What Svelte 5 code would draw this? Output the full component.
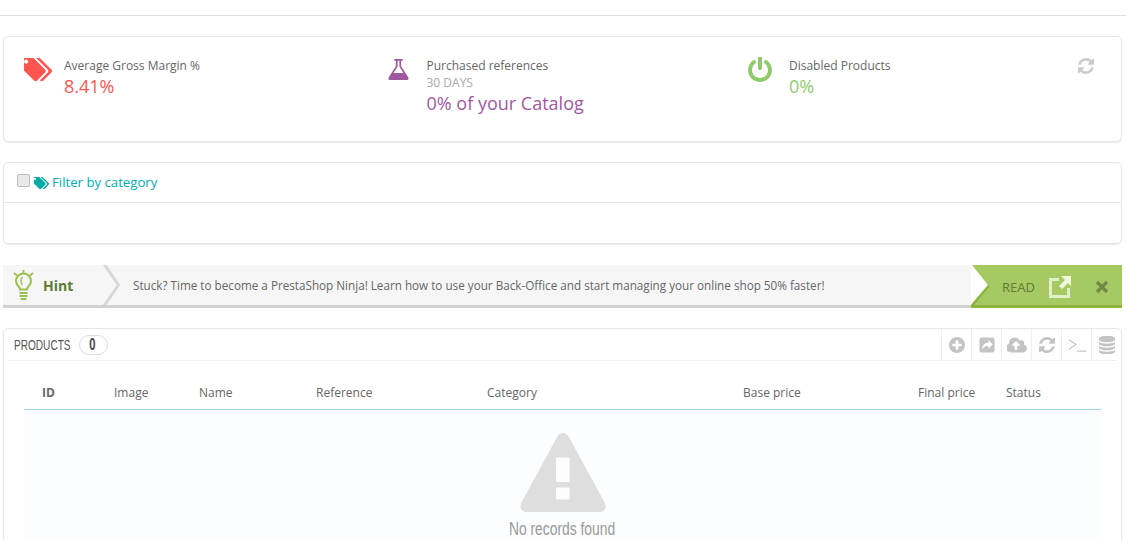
<script>
  const columns = [
    { label: 'ID', w: 72, bold: true },
    { label: 'Image', w: 85 },
    { label: 'Name', w: 117 },
    { label: 'Reference', w: 171 },
    { label: 'Category', w: 256 },
    { label: 'Base price', w: 175 },
    { label: 'Final price', w: 88 },
    { label: 'Status', w: 95 }
  ];
</script>

<div class="page">
  <div class="topbar"></div>

  <section class="card kpis">
    <div class="kpi">
      <svg class="kpi-icon tag" viewBox="128 256 1707 1345"><path d="M384 448q0-53-37.5-90.5t-90.5-37.5-90.5 37.5-37.5 90.5 37.5 90.5 90.5 37.5 90.5-37.5 37.5-90.5zm1067 576q0 53-37 90l-491 492q-39 37-91 37-53 0-90-37l-715-716q-38-37-64.5-101t-26.5-117v-416q0-52 38-90t90-38h416q53 0 117 26.5t102 64.5l715 714q37 39 37 91zm384 0q0 53-37 90l-491 492q-38 38-91 38-36 0-59-14t-53-45l470-470q37-37 37-90 0-52-37-91l-715-714q-38-38-102-64.5t-117-26.5h224q53 0 117 26.5t102 64.5l715 714q37 39 37 91z"/></svg>
      <div class="kpi-text">
        <div class="kpi-title">Average Gross Margin %</div>
        <div class="kpi-value red">8.41%</div>
      </div>
    </div>
    <div class="kpi">
      <svg class="kpi-icon flask" viewBox="135 128 1522 1536"><path d="M1591 1448q56 89 21.5 152.5t-140.5 63.5h-1152q-106 0-140.5-63.5t21.5-152.5l503-793v-399h-64q-26 0-45-19t-19-45 19-45 45-19h512q26 0 45 19t19 45-19 45-45 19h-64v399zm-779-725l-272 429h712l-272-429-20-31v-436h-128v436z"/></svg>
      <div class="kpi-text">
        <div class="kpi-title">Purchased references</div>
        <div class="kpi-sub">30 DAYS</div>
        <div class="kpi-value purple">0% of your Catalog</div>
      </div>
    </div>
    <div class="kpi">
      <svg class="kpi-icon power" viewBox="128 64 1536 1600"><path d="M1664 896q0 156-61 298t-164 245-245 164-298 61-298-61-245-164-164-245-61-298q0-182 80.5-343t226.5-270q43-32 95.5-25t83.5 50q32 42 24.5 94.5t-49.5 84.5q-98 74-151.5 181t-53.5 228q0 104 40.5 198.5t109.5 163.5 163.5 109.5 198.5 40.5 198.5-40.5 163.5-109.5 109.5-163.5 40.5-198.5q0-121-53.5-228t-151.5-181q-42-32-49.5-84.5t24.5-94.5q31-43 84-50t95 25q146 109 226.5 270t80.5 343zm-640-768v640q0 52-38 90t-90 38-90-38-38-90v-640q0-52 38-90t90-38 90 38 38 90z"/></svg>
      <div class="kpi-text">
        <div class="kpi-title">Disabled Products</div>
        <div class="kpi-value green">0%</div>
      </div>
    </div>
    <svg class="kpi-refresh" viewBox="128 128 1536 1536"><path d="M1639 1056q0 5-1 7-64 268-268 434.5t-478 166.5q-146 0-282.5-55t-243.5-157l-129 129q-19 19-45 19t-45-19-19-45v-448q0-26 19-45t45-19h448q26 0 45 19t19 45-19 45l-137 137q71 66 161 102t187 36q134 0 250-65t186-179q11-17 53-117 8-23 30-23h192q13 0 22.5 9.5t9.5 22.5zm25-800v448q0 26-19 45t-45 19h-448q-26 0-45-19t-19-45 19-45l138-138q-148-137-349-137-134 0-250 65t-186 179q-11 17-53 117-8 23-30 23h-199q-13 0-22.5-9.5t-9.5-22.5v-7q65-268 270-434.5t480-166.5q146 0 284 55.5t245 156.5l130-129q19-19 45-19t45 19 19 45z"/></svg>
  </section>

  <section class="card filter">
    <div class="filter-head">
      <input type="checkbox" class="check" />
      <svg class="filter-icon" viewBox="128 256 1707 1345"><path d="M384 448q0-53-37.5-90.5t-90.5-37.5-90.5 37.5-37.5 90.5 37.5 90.5 90.5 37.5 90.5-37.5 37.5-90.5zm1067 576q0 53-37 90l-491 492q-39 37-91 37-53 0-90-37l-715-716q-38-37-64.5-101t-26.5-117v-416q0-52 38-90t90-38h416q53 0 117 26.5t102 64.5l715 714q37 39 37 91zm384 0q0 53-37 90l-491 492q-38 38-91 38-36 0-59-14t-53-45l470-470q37-37 37-90 0-52-37-91l-715-714q-38-38-102-64.5t-117-26.5h224q53 0 117 26.5t102 64.5l715 714q37 39 37 91z"/></svg>
      <span class="filter-label">Filter by category</span>
    </div>
  </section>

  <section class="hint">
    <div class="hint-main">
      <div class="hint-head">
        <svg class="bulb" viewBox="0 0 22 30">
          <g fill="none" stroke="#9bbf4e">
            <path stroke-width="2" d="M7 19.500C7 16.500 3 15.500 3 11a7.500 7.500 0 0 1 15 0C18 15.500 14 16.500 14 19.500z"/>
            <path stroke-width="1.800" d="M10.500 0v3.500M1 3l3 2.500M20 3l-3 2.500"/>
            <path stroke-width="1.300" d="M9.500 7q-3 4 0 8"/>
          </g>
          <path d="M6.500 22h8v2h-8zM6.500 25h8v2h-8zM7.500 28h6v2h-6z" fill="#9bbf4e"/>
        </svg>
        <span class="hint-word">Hint</span>
      </div>
      <svg class="chevron" viewBox="0 0 18 40" preserveAspectRatio="none"><path d="M1 -1 L15.500 20 L1 41" fill="none" stroke="#d8d8d8" stroke-width="3"/></svg>
      <p class="hint-text">Stuck? Time to become a PrestaShop Ninja! Learn how to use your Back-Office and start managing your online shop 50% faster!</p>
    </div>
    <div class="hint-read">
      <svg class="read-edge" viewBox="0 0 18 41"><path d="M17 20L0 41" fill="none" stroke="#8db63e" stroke-width="4"/></svg>
      <span class="read-word">READ</span>
      <svg class="read-icon" viewBox="0 0 22 22">
        <path fill="#e3efc8" d="M0 2h10v3H3v14h15v-7h3v10H0z"/>
        <path fill="#eef6dc" d="M12 0h10v10l-3-3-6 6-3-3 6-6z"/>
      </svg>
      <svg class="read-close" viewBox="0 0 14 14"><path d="M2 2l10 10M12 2L2 12" stroke="#6f8a45" stroke-width="3.200" fill="none"/></svg>
    </div>
  </section>

  <section class="card products">
    <header class="panel-head">
      <span class="panel-title"><span class="narrow-left">PRODUCTS</span></span>
      <span class="badge"><span class="narrow-center">0</span></span>
      <div class="tools">
        <span class="tool"><svg viewBox="128 128 1536 1536"><path d="M1344 960v-128q0-26-19-45t-45-19h-256v-256q0-26-19-45t-45-19h-128q-26 0-45 19t-19 45v256h-256q-26 0-45 19t-19 45v128q0 26 19 45t45 19h256v256q0 26 19 45t45 19h128q26 0 45-19t19-45v-256h256q26 0 45-19t19-45zm320-64q0 209-103 385.5t-279.5 279.5-385.5 103-385.5-103-279.5-279.5-103-385.5 103-385.5 279.5-279.5 385.5-103 385.5 103 279.5 279.5 103 385.5z"/></svg></span>
        <span class="tool"><svg viewBox="0 0 18 18"><path fill-rule="evenodd" d="M3 .5h12A2.500 2.500 0 0 1 17.500 3v12a2.500 2.500 0 0 1-2.500 2.500H3A2.500 2.500 0 0 1 .5 15V3A2.500 2.500 0 0 1 3 .5zm7.500 3v3C7 6.500 4 8 3.500 14c1.500-2.500 3.500-3.800 7-3.800v3l5-4.900z"/></svg></span>
        <span class="tool cloud"><svg viewBox="0 128 1856 1408"><path d="M1216 864q0-14-9-23l-352-352q-9-9-23-9t-23 9l-351 351q-10 12-10 24 0 14 9 23t23 9h224v352q0 13 9.500 22.500t22.500 9.500h192q13 0 22.500-9.500t9.500-22.500v-352h224q13 0 22.500-9.500t9.500-22.500zm640 288q0 159-112.500 271.500t-271.500 112.500h-1088q-185 0-316.500-131.500t-131.500-316.500q0-130 70-240t188-165q-2-30-2-43 0-212 150-362t362-150q156 0 285.500 87t188.500 231q71-62 166-62 106 0 181 75t75 181q0 76-41 138 130 31 213.500 135.500t83.500 238.500z"/></svg></span>
        <span class="tool"><svg viewBox="128 128 1536 1536"><path d="M1639 1056q0 5-1 7-64 268-268 434.5t-478 166.5q-146 0-282.5-55t-243.5-157l-129 129q-19 19-45 19t-45-19-19-45v-448q0-26 19-45t45-19h448q26 0 45 19t19 45-19 45l-137 137q71 66 161 102t187 36q134 0 250-65t186-179q11-17 53-117 8-23 30-23h192q13 0 22.500 9.500t9.500 22.500zm25-800v448q0 26-19 45t-45 19h-448q-26 0-45-19t-19-45 19-45l138-138q-148-137-349-137-134 0-250 65t-186 179q-11 17-53 117-8 23-30 23h-199q-13 0-22.500-9.500t-9.500-22.500v-7q65-268 270-434.500t480-166.500q146 0 284 55.500t245 156.500l130-129q19-19 45-19t45 19 19 45z"/></svg></span>
        <span class="tool term"><svg viewBox="0 0 18 13"><path d="M1 .8l7 4.700-7 4.700" fill="none" stroke="#c4c4c4" stroke-width="1.200"/><path d="M9 11.500h9v1.200h-9z"/></svg></span>
        <span class="tool db"><svg viewBox="128 64 1536 1664"><path d="M896 768q237 0 443-43t325-127v170q0 69-103 128t-280 93.500-385 34.500-385-34.500-280-93.500-103-128v-170q119 84 325 127t443 43zm0 768q237 0 443-43t325-127v170q0 69-103 128t-280 93.500-385 34.500-385-34.500-280-93.500-103-128v-170q119 84 325 127t443 43zm0-384q237 0 443-43t325-127v170q0 69-103 128t-280 93.500-385 34.500-385-34.500-280-93.500-103-128v-170q119 84 325 127t443 43zm0-1152q208 0 385 34.500t280 93.500 103 128v128q0 69-103 128t-280 93.500-385 34.500-385-34.500-280-93.500-103-128v-128q0-69 103-128t280-93.500 385-34.500z"/></svg></span>
      </div>
    </header>

    <div class="table">
      <div class="thead">
        {#each columns as col}
          <div class="th" class:bold={col.bold} style="width: {col.w}px">{col.label}</div>
        {/each}
      </div>
      <div class="empty">
        <svg class="warn" viewBox="0 0 86 79">
          <path fill-rule="evenodd" fill="#dedede" d="M43 0c2.600 0 4.300 1.400 5.600 3.600l36 66c2.500 4.500.2 9.400-5 9.400H6.400c-5.200 0-7.500-4.900-5-9.400l36-66C38.700 1.400 40.400 0 43 0zM37 24.500c-.8 0-1 .6-1 1.200v22.100c0 .7.400 1.200 1 1.200h11.500c.7 0 1.100-.5 1.100-1.200V25.700c0-.6-.4-1.200-1.100-1.200zM37 54.500c-.7 0-1 .5-1 1.100v9.800c0 .7.300 1.100 1 1.100h11.500c.7 0 1.100-.4 1.100-1.100v-9.800c0-.6-.4-1.100-1.100-1.100z"/>
        </svg>
        <div class="empty-text">No records found</div>
      </div>
    </div>
  </section>
</div>

<style>
  :global(html), :global(body) { margin: 0; height: 540px; overflow: hidden; background: #fff; }
  .page { font-family: "Open Sans", sans-serif; color: #555; font-size: 12px; box-sizing: border-box; padding: 0 4px 0 3px; height: 540px; overflow: hidden; }
  .page * { box-sizing: border-box; }
  .topbar { height: 16px; margin: 0 -4px 20px -3px; border-bottom: 1px solid #e0e0e0; }
  .card { background: #fff; border: 1px solid #e6e6e6; border-radius: 5px; box-shadow: 0 1px 1px #eee; }

  .kpis { height: 106px; display: flex; position: relative; padding: 17px 0 0 20px; margin-bottom: 20px; }
  .kpi { width: 362.500px; display: flex; }
  .kpi-icon { flex: none; }
  .kpi-icon.tag { width: 28px; height: 23px; margin: 4px 12px 0 0; fill: #ff5450; }
  .kpi-icon.flask { width: 21px; height: 23px; margin: 4px 17.500px 0 1.500px; fill: #a2589f; }
  .kpi-icon.power { width: 24px; height: 25px; margin: 3px 17px 0 -1px; fill: #8fcb6a; }
  .kpi-text { line-height: 16px; padding-top: 3px; }
  .kpi-title { font-size: 12px; line-height: 17px; color: #666; }
  .kpi-sub { font-size: 12px; line-height: 17px; color: #aaa; }
  .kpi-value { font-size: 18px; line-height: 24px; }
  .kpi-value.red { color: #ff5450; }
  .kpi-value.purple { color: #a2589f; }
  .kpi-value.green { color: #8fcb6a; }
  .kpi-refresh { position: absolute; right: 27px; top: 21px; width: 16px; height: 16px; fill: #ccc; }

  .filter { height: 82px; margin-bottom: 21px; }
  .filter-head { height: 40px; border-bottom: 1px solid #e6e6e6; display: flex; align-items: center; padding-left: 13px; }
  .check { appearance: none; width: 13px; height: 13px; margin: 0 4px 5px 0; background: #e9e9e9; border: 1px solid #bbb; border-radius: 2px; }
  .filter-icon { width: 15px; height: 12px; fill: #00aca5; margin-right: 3px; }
  .filter-label { font-size: 13.200px; color: #00aeb5; margin-bottom: 2px; }

  .hint { height: 43px; display: flex; }
  .hint-main { flex: 1; display: flex; align-items: center; background: #f6f6f6; border-bottom: 3px solid #d2d2d2; height: 43px; }
  .hint-head { width: 100px; display: flex; align-items: center; padding-left: 10px; flex: none; }
  .bulb { width: 22px; height: 30px; flex: none; }
  .hint-word { margin-left: 8px; font-size: 14px; font-weight: 700; color: #5d7c30; }
  .chevron { width: 18px; height: 40px; flex: none; }
  .hint-text { margin: 0 0 0 12px; font-size: 11.700px; color: #666; white-space: nowrap; }
  .hint-read {
    position: relative;
    width: 151px; flex: none; height: 43px; display: flex; align-items: center;
    background: linear-gradient(#a6c963 40px, #8db63e 40px);
    clip-path: polygon(1px 0, 100% 0, 100% 100%, 0 100%, 0 40px, 17px 20px);
    color: #62793a; padding-left: 31px;
  }
  .read-edge { position: absolute; left: 0; top: 0; width: 18px; height: 41px; }
  .read-word { font-size: 13px; margin-top: 1px; }
  .read-icon { width: 22px; height: 22px; margin-left: 14px; }
  .read-close { width: 14px; height: 14px; margin-left: 24px; }

  .products { margin-top: 20px; height: 400px; padding: 0 4px; }
  .panel-head { height: 32px; display: flex; align-items: center; border-bottom: 1px solid #eee; }
  .panel-title { width: 56px; margin-left: 6px; flex: none; font-family: "Liberation Sans", sans-serif; font-size: 15.500px; color: #555; white-space: nowrap; }
  .narrow-left { display: inline-block; transform: scaleX(0.65); transform-origin: left center; }
  .badge { width: 29px; height: 20px; margin-left: 9px; flex: none; border: 1px solid #ddd; border-radius: 10px; text-align: center; font-family: "Liberation Sans", sans-serif; font-weight: 700; font-size: 16px; line-height: 18px; color: #444; }
  .narrow-center { display: inline-block; transform: scaleX(0.7); margin-right: 2px; }
  .tools { margin: 0 -4px 0 auto; display: flex; height: 31px; align-self: flex-start; }
  .tool { width: 30px; border-left: 1px solid #eee; display: flex; align-items: center; justify-content: center; padding-top: 1px; }
  .tool svg { width: 16px; height: 16px; fill: #c4c4c4; }
  .tool.cloud svg { width: 20px; height: 16px; }
  .tool.term svg { width: 18px; height: 13px; }
  .tool.db svg { width: 16px; height: 18px; }

  .table { margin: 0 16px; }
  .thead { display: flex; height: 49px; align-items: center; border-bottom: 1px solid #a0d0eb; padding-left: 18px; padding-top: 17px; padding-bottom: 3px; }
  .th { font-size: 12px; color: #666; flex: none; }
  .th.bold { font-weight: 700; }
  .empty { background: #fcfdfe; display: flex; flex-direction: column; align-items: center; padding-top: 23px; min-height: 300px; }
  .warn { width: 86px; height: 79px; }
  .empty-text { font-family: "Liberation Sans", sans-serif; font-size: 18px; color: #999; margin-top: 7px; transform: scaleX(0.77); white-space: nowrap; }
</style>
